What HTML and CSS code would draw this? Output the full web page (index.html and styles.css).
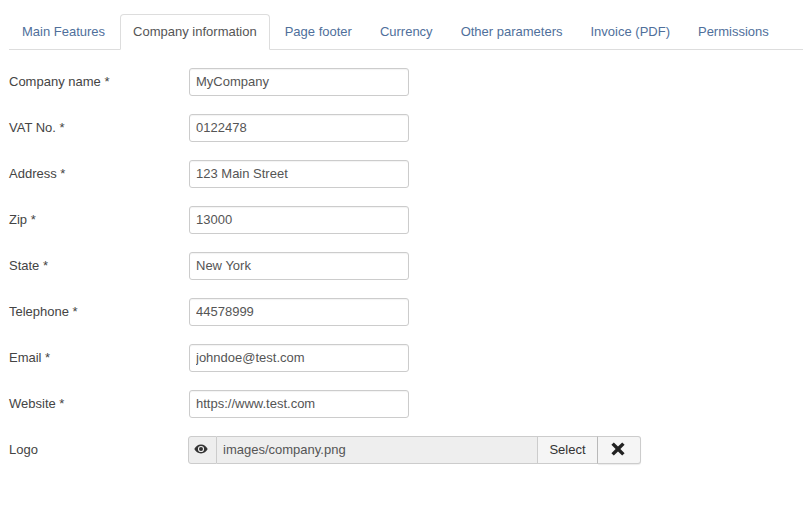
FILE: index.html
```html
<!DOCTYPE html>
<html lang="en">
<head>
<meta charset="utf-8">
<title>Company information</title>
<link rel="stylesheet" href="styles.css">
</head>
<body>
<ul class="tabs">
  <li class="tab first">Main Features</li>
  <li class="tab active">Company information</li>
  <li class="tab">Page footer</li>
  <li class="tab">Currency</li>
  <li class="tab">Other parameters</li>
  <li class="tab">Invoice (PDF)</li>
  <li class="tab">Permissions</li>
</ul>
<form class="form">
  <div class="row"><label class="label">Company name *</label><input class="field" value="MyCompany"></div>
  <div class="row"><label class="label">VAT No. *</label><input class="field" value="0122478"></div>
  <div class="row"><label class="label">Address *</label><input class="field" value="123 Main Street"></div>
  <div class="row"><label class="label">Zip *</label><input class="field" value="13000"></div>
  <div class="row"><label class="label">State *</label><input class="field" value="New York"></div>
  <div class="row"><label class="label">Telephone *</label><input class="field" value="44578999"></div>
  <div class="row"><label class="label">Email *</label><input class="field" value="johndoe@test.com"></div>
  <div class="row"><label class="label">Website *</label><input class="field" value="https://www.test.com"></div>
  <div class="row">
    <label class="label">Logo</label>
    <div class="media">
      <span class="addon"><svg class="eye" viewBox="0 0 14 10" width="14" height="10"><path d="M7 .6C4 .6 1.700 2.500.3 5c1.400 2.500 3.700 4.400 6.700 4.400S12.300 7.500 13.700 5C12.300 2.500 10 .6 7 .6Zm0 7.500A3.100 3.100 0 1 1 7 1.900a3.100 3.100 0 0 1 0 6.200Z" fill="#333"/><circle cx="7" cy="5" r="2" fill="#333"/></svg></span>
      <span class="path">images/company.png</span>
      <button type="button" class="btn select">Select</button>
      <button type="button" class="btn clear"><svg viewBox="0 0 14 14" width="14" height="14"><path d="M2.800.4 7 4.600 11.200.4 13.600 2.800 9.400 7 13.600 11.200 11.200 13.600 7 9.400 2.800 13.600.4 11.200 4.600 7 .4 2.800Z" fill="#222"/></svg></button>
    </div>
  </div>
</form>
</body>
</html>
```
FILE: styles.css
```css
* { box-sizing: border-box; }
html, body { margin: 0; padding: 0; background: #fff; }
body {
  width: 803px;
  height: 513px;
  overflow: hidden;
  font-family: "Liberation Sans", Arial, sans-serif;
  font-size: 13px;
  color: #555;
}
.tabs {
  display: flex;
  list-style: none;
  margin: 14px 0 0 9px;
  padding: 0;
  height: 36px;
  border-bottom: 1px solid #ddd;
}
.tab {
  height: 36px;
  padding: 8px 13px 0;
  line-height: 17px;
  font-size: 13px;
  color: #4f6f9b;
  border: 1px solid transparent;
  border-radius: 4px 4px 0 0;
  white-space: nowrap;
}
.tab.first { margin-left: -1px; }
.tab.active {
  margin: 0 1px;
  padding: 8px 12px 0;
  color: #555;
  background: #fff;
  border-color: #ddd #ddd #fff;
}
.form {
  display: flex;
  flex-direction: column;
  gap: 18px;
  padding: 18px 0 0 9px;
}
.row {
  display: flex;
  align-items: center;
  height: 28px;
}
.label {
  width: 180px;
  color: #444;
  font-size: 13px;
  position: relative;
  top: -1px;
}
.field {
  width: 220px;
  height: 28px;
  padding: 0 6px 2px;
  border: 1px solid #ccc;
  border-radius: 3px;
  font: 13px "Liberation Sans", Arial, sans-serif;
  color: #555;
  background: #fff;
  box-shadow: inset 0 1px 1px rgba(0,0,0,.05);
}
.media {
  display: flex;
  height: 28px;
  margin-left: -1px;
}
.addon {
  width: 29px;
  height: 28px;
  padding: 0 4px 2px 0;
  display: flex;
  align-items: center;
  justify-content: center;
  background: #eee;
  border: 1px solid #ccc;
  border-radius: 3px 0 0 3px;
}
.path {
  width: 321px;
  height: 28px;
  padding: 0 6px;
  line-height: 26px;
  background: #eee;
  border: 1px solid #ccc;
  border-left: 0;
  color: #555;
}
.btn {
  height: 28px;
  padding: 0 0 2px;
  border: 1px solid #ccc;
  background: #f5f5f5;
  color: #333;
  font: 13px "Liberation Sans", Arial, sans-serif;
  display: flex;
  align-items: center;
  justify-content: center;
}
.select { width: 60px; border-left: 0; border-right: 1px solid #bbb; }
.clear {
  width: 43px;
  padding-right: 3px;
  border-left: 0;
  border-radius: 0 3px 3px 0;
  box-shadow: 0 1px 1px rgba(0,0,0,.08);
}
```
